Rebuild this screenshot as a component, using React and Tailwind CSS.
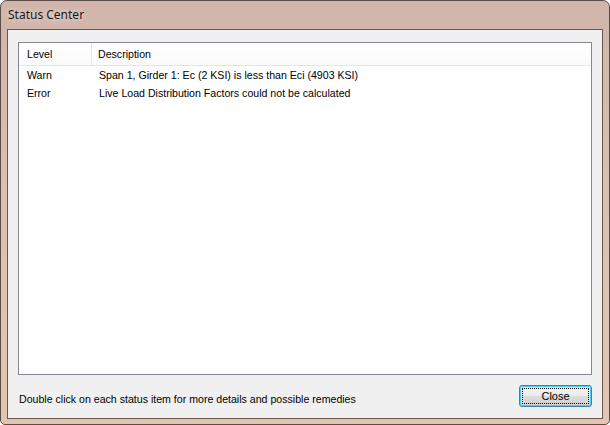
import React from 'react';

const rows = [
  { level: 'Warn', text: 'Span 1, Girder 1: Ec (2 KSI) is less than Eci (4903 KSI)' },
  { level: 'Error', text: 'Live Load Distribution Factors could not be calculated' },
];

const App = () => {
  return (
    <div className="w-[610px] h-[425px] bg-white">
      {/* window frame */}
      <div className="w-full h-full flex flex-col rounded-t-[7px] rounded-b-[5px] border border-[#5a4c46] bg-gradient-to-b from-[#d1b5aa] via-[#dcc0b3] to-[#e4c5b0] px-[6px] pb-[5px]">
        {/* title bar */}
        <div className="h-[28px] flex items-center pl-[1px]">
          <span className="text-[12px] text-[#1a1a1a] font-['Noto_Sans','Liberation_Sans',sans-serif] [text-shadow:0_0_6px_rgba(255,255,255,0.8)]">
            Status Center
          </span>
        </div>

        {/* client area */}
        <div className="flex-1 flex flex-col border border-[#6a5850] bg-[#f0f0f0] pt-[12px] px-[10px] pb-[11px] font-['Liberation_Sans',Arial,sans-serif] text-[10.6px] text-black">
          {/* list view */}
          <div className="flex-1 flex flex-col border border-[#828790] bg-white">
            <div className="h-[23px] flex items-stretch border-b border-[#e5e5e5] bg-gradient-to-b from-white to-[#fbfbfc]">
              <div className="w-[73px] flex items-center pl-[8px] pt-[2px] border-r border-[#e3e5e9]">Level</div>
              <div className="flex-1 flex items-center pl-[6px] pt-[2px]">Description</div>
            </div>
            <div className="pt-[1px]">
              {rows.map((r) => (
                <div key={r.level} className="h-[18px] flex items-center">
                  <div className="w-[74px] pl-[8px]">{r.level}</div>
                  <div className="flex-1 pl-[6px]">{r.text}</div>
                </div>
              ))}
            </div>
          </div>

          {/* footer */}
          <div className="mt-[10px] h-[22px] flex items-center justify-between">
            <span className="pl-[1px] pt-[8px]">Double click on each status item for more details and possible remedies</span>
            <button className="w-[73px] h-[22px] rounded-[3px] border border-[#3c7fb1] shadow-[inset_0_0_0_1px_#48d0fb] bg-[linear-gradient(to_bottom,#f2f2f2_0%,#ebebeb_50%,#dddddd_51%,#cfcfcf_100%)] p-[2px]">
              <div className="w-full h-full border border-dotted border-black flex items-center justify-center text-[11px]">
                Close
              </div>
            </button>
          </div>
        </div>
      </div>
    </div>
  );
};

export default App;
